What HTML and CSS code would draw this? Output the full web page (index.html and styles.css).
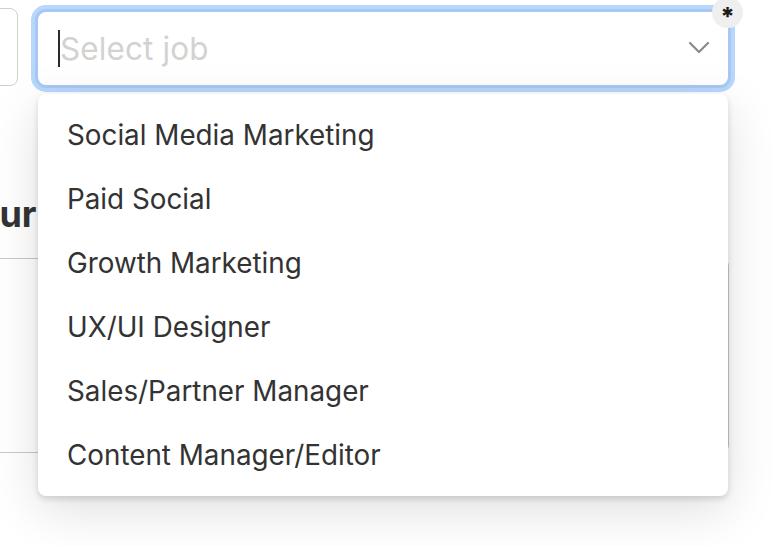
FILE: index.html
```html
<!DOCTYPE html>
<html lang="en">
<head>
<meta charset="utf-8">
<title>Select job</title>
<link rel="stylesheet" href="styles.css">
</head>
<body>
<div class="page">
  <div class="top-row">
    <div class="prev-field"></div>
    <div class="select">
      <span class="caret"></span>
      <span class="placeholder">Select job</span>
      <svg class="chevron" width="22" height="14" viewBox="0 0 22 14"><path d="M2 2 L11 11 L20 2" fill="none" stroke="#8a8a8a" stroke-width="2.2" stroke-linecap="round" stroke-linejoin="round"/></svg>
      <span class="badge">*</span>
    </div>
  </div>
  <h2 class="section-title">Your role</h2>
  <div class="card"></div>
</div>
<ul class="dropdown">
  <li>Social Media Marketing</li>
  <li>Paid Social</li>
  <li>Growth Marketing</li>
  <li>UX/UI Designer</li>
  <li>Sales/Partner Manager</li>
  <li>Content Manager/Editor</li>
</ul>
</body>
</html>
```
FILE: styles.css
```css
html, body {
  margin: 0;
  padding: 0;
  background: #ffffff;
  font-family: Inter, "Noto Sans", sans-serif;
  color: #333333;
  overflow: hidden;
  width: 775px;
  height: 546px;
  position: relative;
}

.page {
  display: flex;
  flex-direction: column;
}

.top-row {
  display: flex;
  align-items: flex-start;
  padding-top: 8px;
}

.prev-field {
  width: 60px;
  height: 78px;
  margin-left: -42px;
  box-sizing: border-box;
  border: 1px solid #cfcfcf;
  border-radius: 8px;
}

.select {
  position: relative;
  box-sizing: border-box;
  margin-left: 17px;
  margin-top: 1px;
  width: 696px;
  height: 79px;
  border: 3px solid #a6c8f2;
  border-radius: 11px;
  box-shadow: 0 0 0 4px #b8d7fc;
  display: flex;
  align-items: center;
  padding-left: 20px;
  background: #ffffff;
}

.caret {
  width: 2px;
  height: 37px;
  background: #2a2a2a;
}

.placeholder {
  font-size: 31.5px;
  color: #d4d2d0;
  margin-left: 0;
  letter-spacing: 0.1px;
}

.chevron {
  position: absolute;
  right: 18px;
  top: 29px;
}

.badge {
  position: absolute;
  left: 674px;
  top: -15px;
  width: 31px;
  height: 31px;
  box-sizing: border-box;
  padding-top: 7px;
  border-radius: 50%;
  background: #efefef;
  color: #1a1a1a;
  font-weight: 800;
  font-size: 25px;
  line-height: 1;
  text-align: center;
}

.section-title {
  margin: 106px 0 0 -45px;
  font-size: 36px;
  font-weight: 700;
  line-height: 40px;
  color: #333333;
  white-space: nowrap;
}

.card {
  margin-top: 24px;
  margin-left: -20px;
  width: 749px;
  height: 195px;
  box-sizing: border-box;
  border: 1px solid #c8c8c8;
  border-radius: 8px;
}

.dropdown {
  position: absolute;
  top: 94px;
  left: 38px;
  width: 690px;
  height: 402px;
  box-sizing: border-box;
  margin: 0;
  padding: 9px 0;
  list-style: none;
  background: #ffffff;
  border-radius: 8px;
  box-shadow: 0 3px 6px rgba(0, 0, 0, 0.14), 0 14px 50px rgba(0, 0, 0, 0.13);
}

.dropdown li {
  height: 64px;
  line-height: 64px;
  padding-left: 29px;
  font-size: 27.8px;
  color: #333333;
}
```
